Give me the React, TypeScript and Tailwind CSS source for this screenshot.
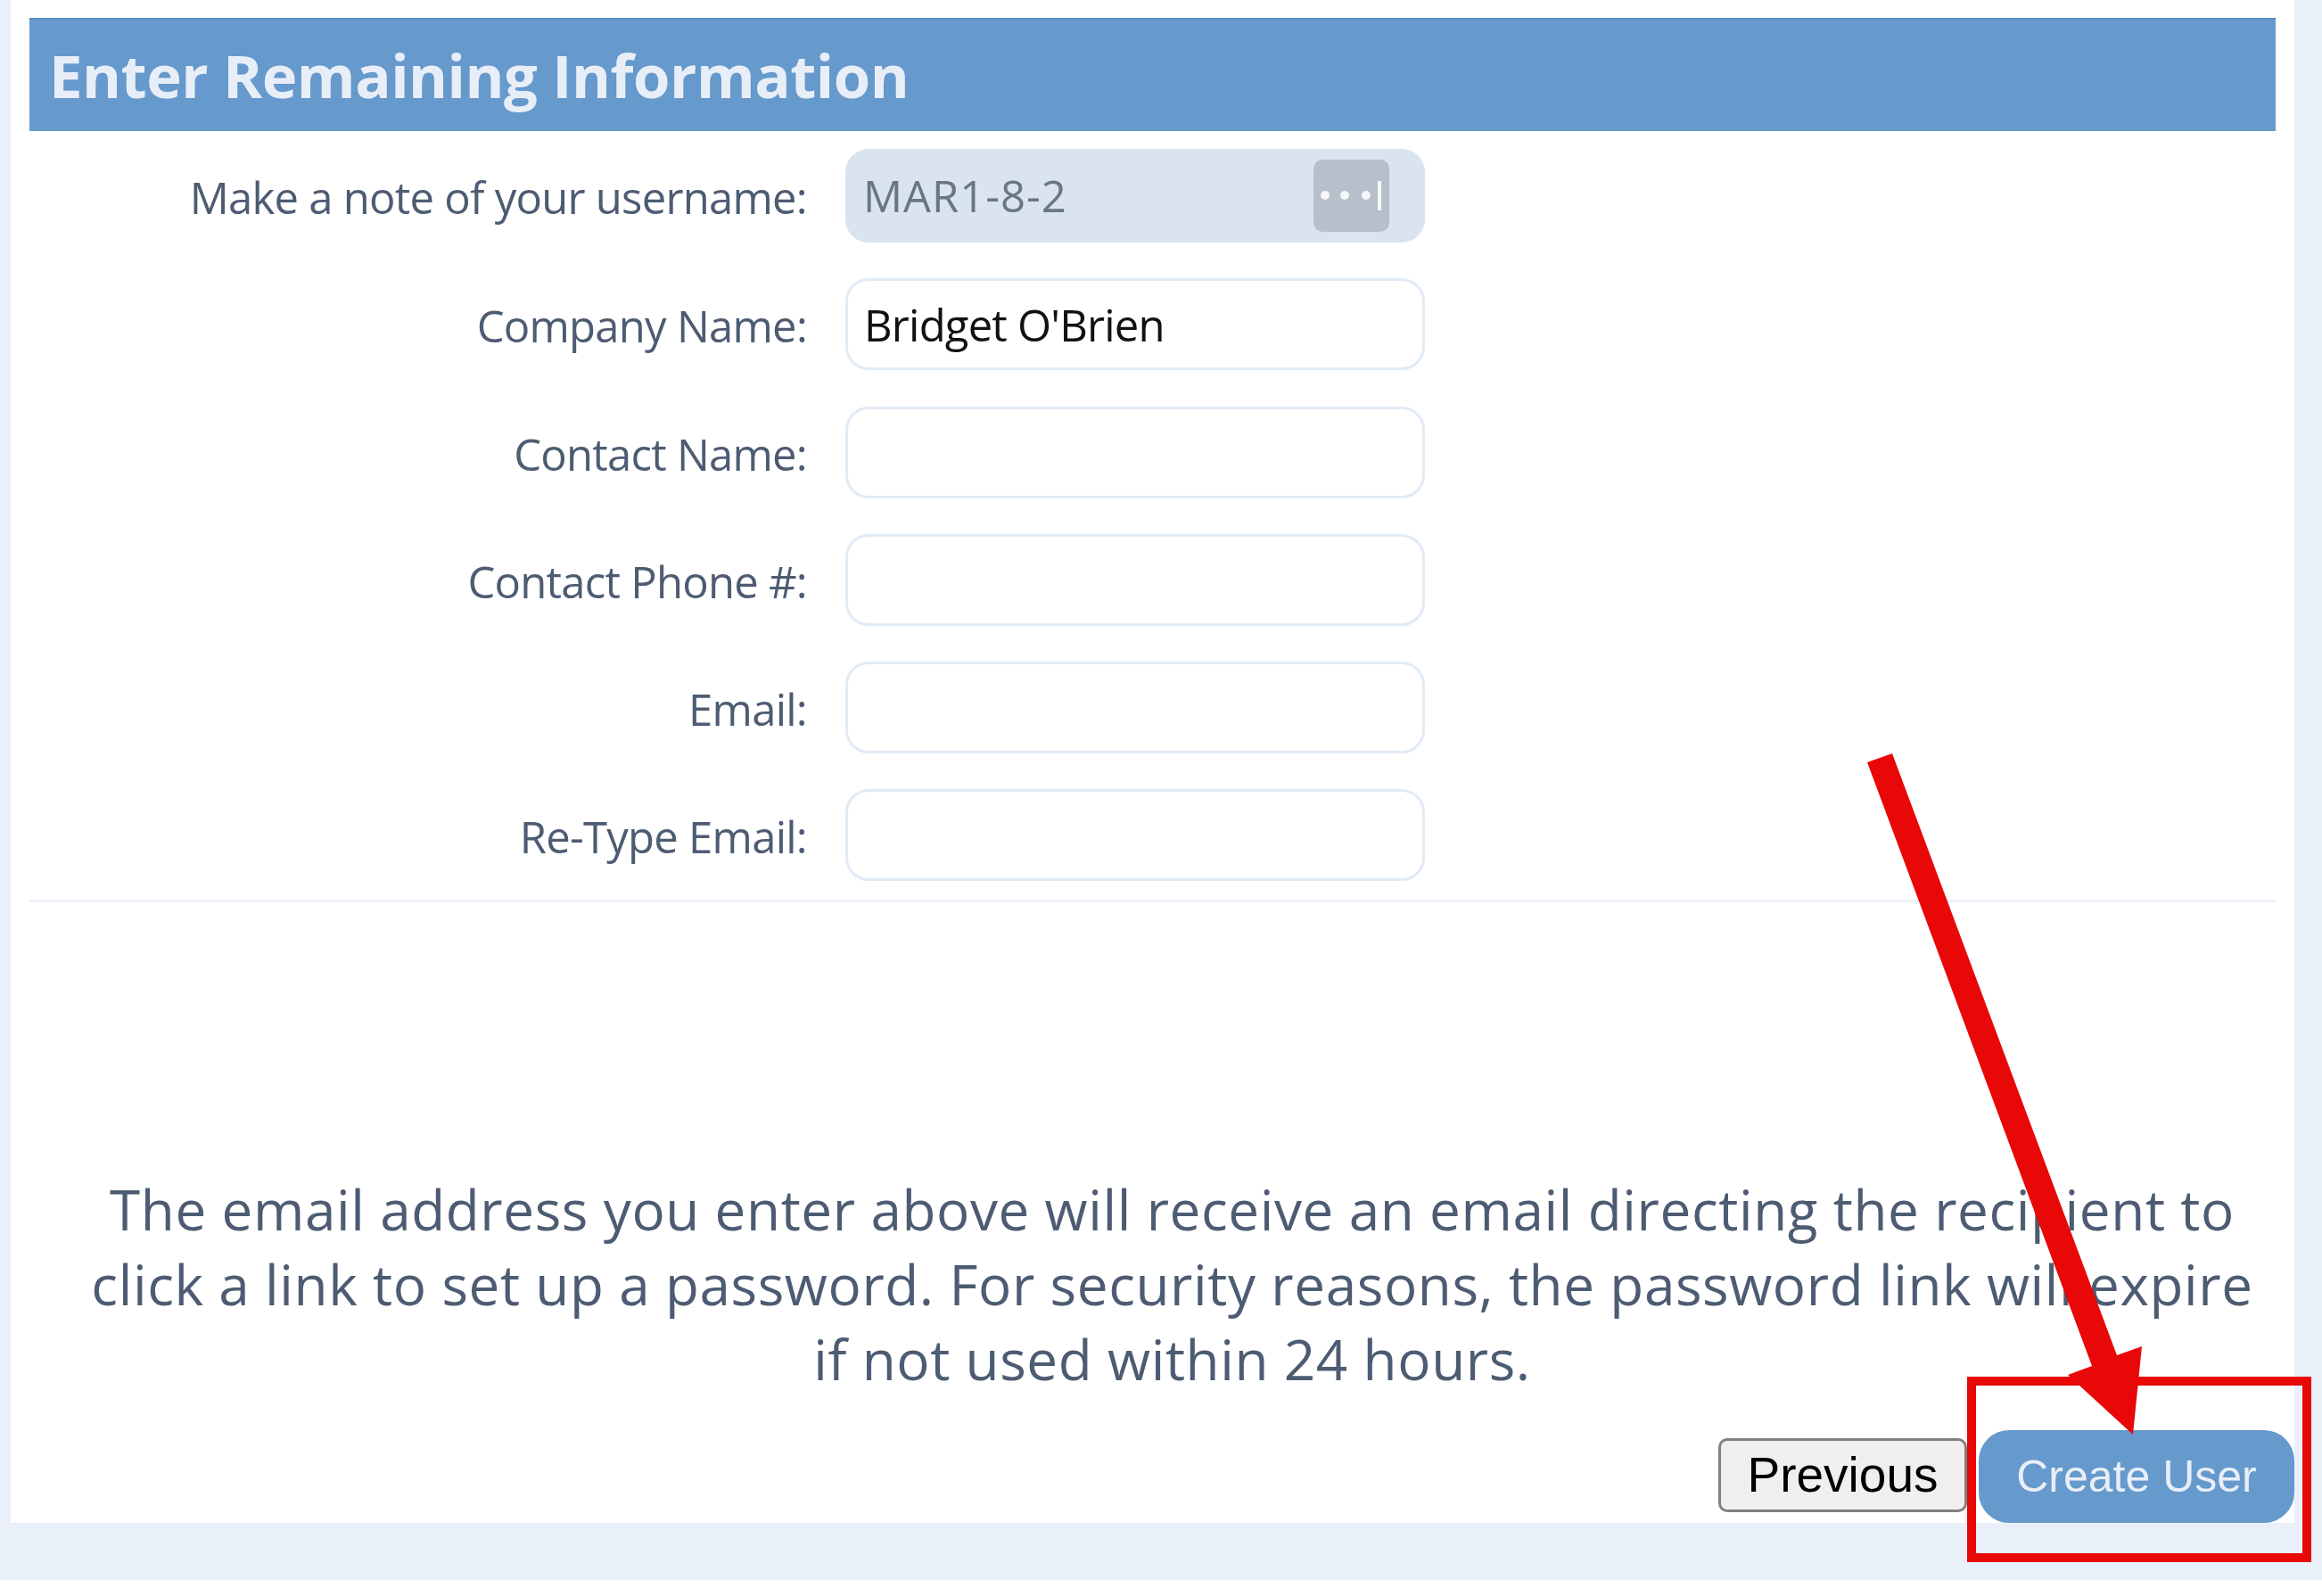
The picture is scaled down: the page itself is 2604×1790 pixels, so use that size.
const rows = [
  { label: "Company Name:", value: "Bridget O'Brien" },
  { label: "Contact Name:", value: "" },
  { label: "Contact Phone #:", value: "" },
  { label: "Email:", value: "" },
  { label: "Re-Type Email:", value: "" },
];

const labelClass =
  "w-[872px] shrink-0 text-right text-[49px] leading-none tracking-[-0.75px] text-[#4d5c72] pt-1";

export default function App() {
  return (
    <div className="relative h-[1790px] w-[2604px] overflow-hidden bg-white font-['Open_Sans',sans-serif]">
      <div className="h-[1772px] bg-[#eaf0f9] pl-3 pr-[31px] blur-[0.7px]">
        <div className="flex h-[1708px] flex-col bg-white px-[21px] pt-5">
          <div className="flex h-[127px] items-center bg-[#6699cc] pl-[22px] text-[67px] font-bold tracking-[-0.5px] text-[#e8eef8] border-t-2 border-[#5c90c6]">
            Enter Remaining Information
          </div>

          <div className="mt-5 flex h-[105px] items-center">
            <div className={labelClass}>Make a note of your username:</div>
            <div className="ml-[43px] flex h-full w-[650px] items-center justify-between rounded-[26px] bg-[#d9e4f0] pl-5 pr-10">
              <span className="text-[49px] leading-none tracking-[1px] text-[#6b7683]">MAR1-8-2</span>
              <button className="flex h-[81px] w-[85px] items-center justify-center rounded-[10px] bg-[#b7bfcb]">
                <svg width="85" height="81" viewBox="0 0 85 81" fill="#f5f7fa">
                  <circle cx="13" cy="40" r="5" />
                  <circle cx="35" cy="40" r="5" />
                  <circle cx="59" cy="40" r="5" />
                  <rect x="72" y="24" width="4" height="33" />
                </svg>
              </button>
            </div>
          </div>

          {rows.map((row) => (
            <div key={row.label} className="mt-[40.25px] flex h-[103px] items-center">
              <div className={labelClass}>{row.label}</div>
              <input
                readOnly
                value={row.value}
                className="ml-[43px] h-full w-[650px] rounded-[26px] border-[3px] border-[#e1ebf5] bg-white pl-[18px] text-[49px] tracking-[-0.8px] text-[#111] outline-none"
              />
            </div>
          ))}

          <div className="mt-[21px] h-[3px] bg-[#edf2f9]" />

          <p className="mt-[302px] pl-[44px] text-center text-[62px] leading-[84px] tracking-[0.6px] text-[#4d5c72] whitespace-nowrap">
            The email address you enter above will receive an email directing the recipient to
            <br />
            click a link to set up a password. For security reasons, the password link will expire
            <br />
            if not used within 24 hours.
          </p>

          <div className="-mr-[21px] mt-auto flex items-end justify-end">
            <button className="mb-3 flex h-[83px] w-[279px] items-center justify-center rounded-[10px] border-[3px] border-[#808080] bg-[#efefef] font-['Liberation_Sans',sans-serif] text-[55px] text-black">
              Previous
            </button>
            <button className="ml-[13px] flex h-[104px] w-[354px] items-center justify-center rounded-[34px] bg-[#6699cc] font-['Liberation_Sans',sans-serif] text-[50px] text-[#e8eef8]">
              Create User
            </button>
          </div>
        </div>
      </div>

      {/* callout drawn on top of the screenshot */}
      <div className="absolute left-[2206px] top-[1544px] h-[208px] w-[386px] border-[10px] border-[#e80808]" />
      <svg className="absolute left-0 top-0" width="2604" height="1790" viewBox="0 0 2604 1790">
        <polygon
          fill="#e80808"
          points="2094,855 2122,845 2374,1520 2402,1510 2392,1609 2319,1542 2346,1532"
        />
      </svg>
    </div>
  );
}
